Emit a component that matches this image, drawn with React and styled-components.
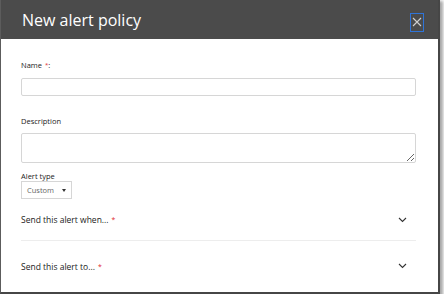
import React from "react";
import styled, { createGlobalStyle } from "styled-components";

const GlobalStyle = createGlobalStyle`
  html, body {
    margin: 0;
    padding: 0;
    background: #ffffff;
  }
  body {
    font-family: "Open Sans", "Noto Sans", sans-serif;
    color: #222;
  }
`;

const Dialog = styled.div`
  width: 437px;
  height: 292px;
  background: #ffffff;
  border-left: 1px solid #5c5c5c;
  border-right: 2px solid #464646;
  border-bottom: 2px solid #464646;
  box-shadow: 2px 2px 3px 1px rgba(0, 0, 0, 0.35);
  display: flex;
  flex-direction: column;
`;

const Header = styled.div`
  height: 39px;
  background: #4b4b4b;
  display: flex;
  align-items: center;
  justify-content: space-between;
  padding: 0 14px 0 21px;
  flex-shrink: 0;
`;

const Title = styled.h1`
  margin: 0;
  font-size: 16px;
  font-weight: 400;
  color: #ffffff;
`;

const CloseButton = styled.button`
  width: 14px;
  height: 19px;
  padding: 0;
  margin-top: 5px;
  border: 1px solid #2f74d8;
  background: transparent;
  display: flex;
  align-items: center;
  justify-content: center;
`;

const Body = styled.div`
  padding: 0 22px 0 20px;
  display: flex;
  flex-direction: column;
`;

const Label = styled.div`
  font-size: 7.5px;
  color: #222;
  margin-top: ${(p) => p.$top}px;
  line-height: 10px;
  height: 10px;
`;

const Required = styled.sup`
  color: #e0262b;
  font-size: 0.8em;
  margin-left: ${(p) => (p.$gap ? 3 : 1)}px;
  vertical-align: 1px;
`;

const TextInput = styled.input`
  box-sizing: border-box;
  height: 18px;
  width: 100%;
  margin: 8px 0 0;
  border: 1px solid #d6d6d6;
  border-radius: 2px;
  outline: none;
`;

const TextArea = styled.textarea`
  box-sizing: border-box;
  height: 30px;
  width: 100%;
  margin: 7px 0 0;
  border: 1px solid #d6d6d6;
  border-radius: 2px;
  outline: none;
  resize: vertical;
  display: block;
`;

const Select = styled.div`
  box-sizing: border-box;
  width: 51px;
  height: 18px;
  border: 1px solid #d6d6d6;
  display: flex;
  align-items: center;
  padding-left: 5px;
  gap: 8px;
  font-size: 7.5px;
  color: #666;
`;

const Caret = styled.span`
  width: 0;
  height: 0;
  border-left: 2.5px solid transparent;
  border-right: 2.5px solid transparent;
  border-top: 3px solid #333;
  margin-top: 1px;
`;

const Section = styled.div`
  height: ${(p) => p.$height}px;
  display: flex;
  align-items: center;
  justify-content: space-between;
  padding-right: 9px;
  font-size: 8.5px;
  color: #222;
  border-bottom: ${(p) => (p.$divider ? "1px solid #ededed" : "none")};
`;

const Chevron = () => (
  <svg width="9" height="6" viewBox="0 0 9 6">
    <path d="M1 1 L4.5 4.5 L8 1" fill="none" stroke="#333" strokeWidth="1.1" />
  </svg>
);

export default function App() {
  return (
    <>
      <GlobalStyle />
      <Dialog>
        <Header>
          <Title>New alert policy</Title>
          <CloseButton aria-label="Close">
            <svg width="10" height="10" viewBox="0 0 10 10">
              <path d="M1 1 L9 9 M9 1 L1 9" stroke="#d0d0d0" strokeWidth="1.1" />
            </svg>
          </CloseButton>
        </Header>
        <Body>
          <Label $top={21}>
            Name<Required $gap>*</Required>:
          </Label>
          <TextInput type="text" />
          <Label $top={20}>Description</Label>
          <TextArea />
          <Label $top={8}>Alert type</Label>
          <Select>
            Custom
            <Caret />
          </Select>
          <Section $height={41} $divider>
            <span>
              Send this alert when...<Required $gap>*</Required>
            </span>
            <Chevron />
          </Section>
          <Section $height={50}>
            <span>
              Send this alert to...<Required $gap>*</Required>
            </span>
            <Chevron />
          </Section>
        </Body>
      </Dialog>
    </>
  );
}
